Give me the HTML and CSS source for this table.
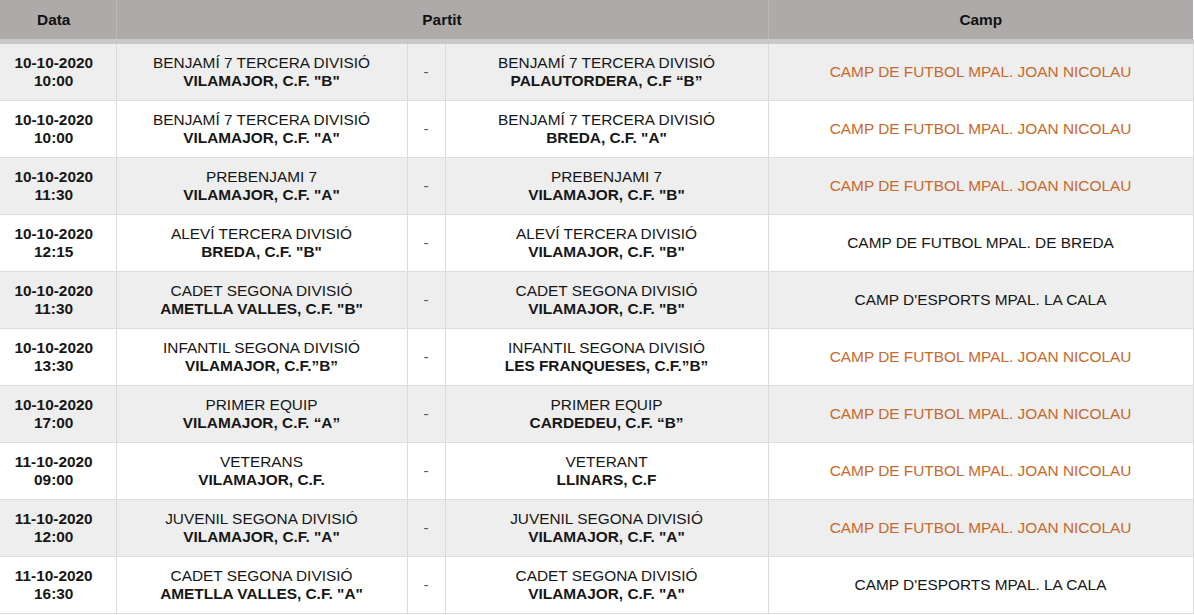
FILE: index.html
```html
<!DOCTYPE html>
<html lang="ca">
<head>
<meta charset="utf-8">
<title>Partits</title>
<link rel="stylesheet" href="styles.css">
</head>
<body>
<table class="fixtures">
  <colgroup>
    <col class="c-date"><col class="c-home"><col class="c-dash"><col class="c-away"><col class="c-camp">
  </colgroup>
  <thead>
    <tr><th>Data</th><th colspan="3">Partit</th><th>Camp</th></tr>
  </thead>
  <tbody>
    <tr class="alt">
      <td class="date">10-10-2020<br>10:00</td>
      <td class="team">BENJAMÍ 7 TERCERA DIVISIÓ<br><b>VILAMAJOR, C.F. "B"</b></td>
      <td class="dash">-</td>
      <td class="team">BENJAMÍ 7 TERCERA DIVISIÓ<br><b>PALAUTORDERA, C.F “B”</b></td>
      <td class="camp orange">CAMP DE FUTBOL MPAL. JOAN NICOLAU</td>
    </tr>
    <tr>
      <td class="date">10-10-2020<br>10:00</td>
      <td class="team">BENJAMÍ 7 TERCERA DIVISIÓ<br><b>VILAMAJOR, C.F. "A"</b></td>
      <td class="dash">-</td>
      <td class="team">BENJAMÍ 7 TERCERA DIVISIÓ<br><b>BREDA, C.F. "A"</b></td>
      <td class="camp orange">CAMP DE FUTBOL MPAL. JOAN NICOLAU</td>
    </tr>
    <tr class="alt">
      <td class="date">10-10-2020<br>11:30</td>
      <td class="team">PREBENJAMI 7<br><b>VILAMAJOR, C.F. "A"</b></td>
      <td class="dash">-</td>
      <td class="team">PREBENJAMI 7<br><b>VILAMAJOR, C.F. "B"</b></td>
      <td class="camp orange">CAMP DE FUTBOL MPAL. JOAN NICOLAU</td>
    </tr>
    <tr>
      <td class="date">10-10-2020<br>12:15</td>
      <td class="team">ALEVÍ TERCERA DIVISIÓ<br><b>BREDA, C.F. "B"</b></td>
      <td class="dash">-</td>
      <td class="team">ALEVÍ TERCERA DIVISIÓ<br><b>VILAMAJOR, C.F. "B"</b></td>
      <td class="camp">CAMP DE FUTBOL MPAL. DE BREDA</td>
    </tr>
    <tr class="alt">
      <td class="date">10-10-2020<br>11:30</td>
      <td class="team">CADET SEGONA DIVISIÓ<br><b>AMETLLA VALLES, C.F. "B"</b></td>
      <td class="dash">-</td>
      <td class="team">CADET SEGONA DIVISIÓ<br><b>VILAMAJOR, C.F. "B"</b></td>
      <td class="camp">CAMP D'ESPORTS MPAL. LA CALA</td>
    </tr>
    <tr>
      <td class="date">10-10-2020<br>13:30</td>
      <td class="team">INFANTIL SEGONA DIVISIÓ<br><b>VILAMAJOR, C.F.”B”</b></td>
      <td class="dash">-</td>
      <td class="team">INFANTIL SEGONA DIVISIÓ<br><b>LES FRANQUESES, C.F.”B”</b></td>
      <td class="camp orange">CAMP DE FUTBOL MPAL. JOAN NICOLAU</td>
    </tr>
    <tr class="alt">
      <td class="date">10-10-2020<br>17:00</td>
      <td class="team">PRIMER EQUIP<br><b>VILAMAJOR, C.F. “A”</b></td>
      <td class="dash">-</td>
      <td class="team">PRIMER EQUIP<br><b>CARDEDEU, C.F. “B”</b></td>
      <td class="camp orange">CAMP DE FUTBOL MPAL. JOAN NICOLAU</td>
    </tr>
    <tr>
      <td class="date">11-10-2020<br>09:00</td>
      <td class="team">VETERANS<br><b>VILAMAJOR, C.F.</b></td>
      <td class="dash">-</td>
      <td class="team">VETERANT<br><b>LLINARS, C.F</b></td>
      <td class="camp orange">CAMP DE FUTBOL MPAL. JOAN NICOLAU</td>
    </tr>
    <tr class="alt">
      <td class="date">11-10-2020<br>12:00</td>
      <td class="team">JUVENIL SEGONA DIVISIÓ<br><b>VILAMAJOR, C.F. "A"</b></td>
      <td class="dash">-</td>
      <td class="team">JUVENIL SEGONA DIVISIÓ<br><b>VILAMAJOR, C.F. "A"</b></td>
      <td class="camp orange">CAMP DE FUTBOL MPAL. JOAN NICOLAU</td>
    </tr>
    <tr>
      <td class="date">11-10-2020<br>16:30</td>
      <td class="team">CADET SEGONA DIVISIÓ<br><b>AMETLLA VALLES, C.F. "A"</b></td>
      <td class="dash">-</td>
      <td class="team">CADET SEGONA DIVISIÓ<br><b>VILAMAJOR, C.F. "A"</b></td>
      <td class="camp">CAMP D'ESPORTS MPAL. LA CALA</td>
    </tr>
  </tbody>
</table>
</body>
</html>
```

FILE: styles.css
```css
html, body {
  margin: 0;
  padding: 0;
  background: #ffffff;
}
body {
  font-family: "Liberation Sans", Arial, sans-serif;
  color: #161616;
}
.fixtures {
  border-collapse: collapse;
  table-layout: fixed;
  width: 1193px;
  font-size: 15.4px;
  line-height: 18px;
}
.c-date { width: 116px; }
.c-home { width: 291px; }
.c-dash { width: 38px; }
.c-away { width: 323px; }
.c-camp { width: 425px; }

.fixtures th {
  background: #aeaaa9;
  height: 39px;
  padding: 0;
  font-weight: bold;
  font-size: 15.4px;
  color: #111111;
  text-align: center;
  vertical-align: middle;
  border-left: 1px solid #bdb9b8;
  border-bottom: 5px solid #cbc9c8;
}
.fixtures th:first-child { border-left: none; padding-right: 8px; }

.fixtures td {
  height: 56px;
  padding: 0;
  text-align: center;
  vertical-align: middle;
  border-left: 1px solid #dadada;
  border-bottom: 1px solid #dcdcdc;
}
.fixtures td:first-child { border-left: none; }
.fixtures td:last-child { border-right: 1px solid #dadada; }
.fixtures tr.alt td { background: #eeeeee; }

.date { font-weight: bold; padding-right: 8px !important; }
.team b { font-weight: bold; }
.dash { color: #555555; }
.camp { color: #161616; }
.camp.orange { color: #c8692c; }
```
